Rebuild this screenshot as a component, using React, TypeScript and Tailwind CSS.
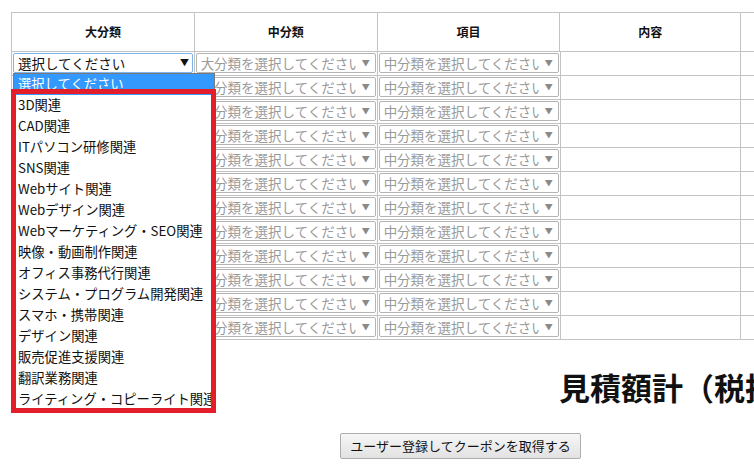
import React from "react";

const options = [
  "選択してください",
  "3D関連",
  "CAD関連",
  "ITパソコン研修関連",
  "SNS関連",
  "Webサイト関連",
  "Webデザイン関連",
  "Webマーケティング・SEO関連",
  "映像・動画制作関連",
  "オフィス事務代行関連",
  "システム・プログラム開発関連",
  "スマホ・携帯関連",
  "デザイン関連",
  "販売促進支援関連",
  "翻訳業務関連",
  "ライティング・コピーライト関連",
];

const rows = Array.from({ length: 12 }, (_, i) => i);

function FakeSelect({ text, active }: { text: string; active?: boolean }) {
  return (
    <div
      className={
        "mx-[1px] mt-[1px] h-[20px] flex items-center rounded-[2px] bg-white border " +
        (active ? "border-[#7eb4ea]" : "border-[#b4b4b4]")
      }
    >
      <span
        className={
          "flex-1 overflow-hidden whitespace-nowrap pl-[4px] text-[13.5px] leading-[18px] " +
          (active ? "text-[#111]" : "text-[#9a9a9a]")
        }
      >
        {text}
      </span>
      <span
        className={
          "shrink-0 text-center " +
          (active ? "w-[14px] text-[9px] text-[#111]" : "w-[18px] text-[8px] text-[#8a8a8a]")
        }
      >
        ▼
      </span>
    </div>
  );
}

export default function App() {
  return (
    <div
      className="relative w-[754px] h-[464px] overflow-hidden bg-white text-[#111]"
      style={{ fontFamily: '"Noto Sans CJK JP", "Liberation Sans", sans-serif' }}
    >
      <div className="pt-[12px] pl-[11px]">
        <div className="w-[850px] border-l border-t border-[#c3c3c3]">
          <div className="flex">
            {["大分類", "中分類", "項目", "内容", ""].map((h, i) => (
              <div
                key={i}
                className={
                  "h-[39px] border-r border-b border-[#c3c3c3] flex items-center justify-center text-[12px] font-bold " +
                  (i === 3 ? "w-[181px]" : i === 4 ? "w-[120px]" : "w-[183px]")
                }
              >
                {h}
              </div>
            ))}
          </div>
          {rows.map((r) => (
            <div key={r} className="flex">
              <div className="w-[183px] h-[24px] border-r border-b border-[#c3c3c3]">
                {r === 0 ? <FakeSelect text="選択してください" active /> : null}
              </div>
              <div className="w-[183px] h-[24px] border-r border-b border-[#c3c3c3]">
                <FakeSelect text="大分類を選択してください" />
              </div>
              <div className="w-[183px] h-[24px] border-r border-b border-[#c3c3c3]">
                <FakeSelect text="中分類を選択してください" />
              </div>
              <div className="w-[181px] h-[24px] border-r border-b border-[#c3c3c3]" />
              <div className="w-[120px] h-[24px] border-r border-b border-[#c3c3c3]" />
            </div>
          ))}
        </div>
      </div>

      <div className="mt-[27px] pl-[559px] whitespace-nowrap text-[31px] leading-[40px] font-bold text-[#111]">
        見積額計（税抜）：0円
      </div>

      <div className="mt-[25px] pl-[340px]">
        <button className="h-[26px] w-[241px] rounded-[2px] border border-[#adadad] bg-gradient-to-b from-[#f6f6f6] to-[#e2e2e2] text-[13px] leading-[24px] text-[#111]">
          ユーザー登録してクーポンを取得する
        </button>
      </div>

      {/* native dropdown list */}
      <div className="absolute left-[13px] top-[73px] w-[202px] bg-white border border-[#7a7a7a]">
        {options.map((o, i) => (
          <div
            key={o}
            className={
              "h-[21px] pl-[4px] pb-[2px] flex items-center whitespace-nowrap text-[13.3px] " +
              (i === 0 ? "bg-[#3399ff] text-white" : "text-[#111]")
            }
          >
            {o}
          </div>
        ))}
      </div>

      {/* red annotation frame */}
      <div className="absolute left-[11px] top-[89px] w-[205px] h-[324px] border-[5px] border-[#e31e2a]" />
    </div>
  );
}
